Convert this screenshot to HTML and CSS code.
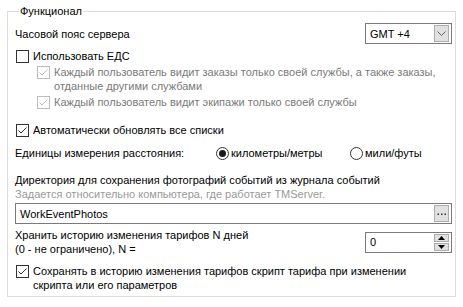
FILE: index.html
```html
<!DOCTYPE html>
<html lang="ru">
<head>
    <meta charset="UTF-8">
    <title>Функционал</title>
    <link rel="stylesheet" href="styles.css">
</head>
<body>
    <fieldset class="group">
        <legend>Функционал</legend>

        <div class="row row-tz">
            <span>Часовой пояс сервера</span>
            <div class="combo">
                <span class="combo-text">GMT +4</span>
                <span class="btn">
                    <svg width="9" height="5" viewBox="0 0 9 5"><path d="M0.5 0.5 L4.5 4.5 L8.5 0.5" fill="none" stroke="#606060"/></svg>
                </span>
            </div>
        </div>

        <label class="check row-eds">
            <span class="box"></span>
            <span>Использовать ЕДС</span>
        </label>

        <label class="check sub disabled row-sub1">
            <span class="box on"><svg width="11" height="11" viewBox="0 0 11 11"><path d="M1.5 5.5 L4 8 L9.5 2.5" fill="none" stroke="#bcbcbc"/></svg></span>
            <span>Каждый пользователь видит заказы только своей службы, а также заказы, отданные другими службами</span>
        </label>

        <label class="check sub disabled row-sub2">
            <span class="box on"><svg width="11" height="11" viewBox="0 0 11 11"><path d="M1.5 5.5 L4 8 L9.5 2.5" fill="none" stroke="#bcbcbc"/></svg></span>
            <span>Каждый пользователь видит экипажи только своей службы</span>
        </label>

        <label class="check row-auto">
            <span class="box on"><svg width="11" height="11" viewBox="0 0 11 11"><path d="M1.5 5.5 L4 8 L9.5 2.5" fill="none" stroke="#333"/></svg></span>
            <span>Автоматически обновлять все списки</span>
        </label>

        <div class="row row-units">
            <span class="units-label">Единицы измерения расстояния:</span>
            <label class="radio"><span class="dot on"></span>километры/метры</label>
            <label class="radio"><span class="dot"></span>мили/футы</label>
        </div>

        <div class="row-dir">
            <div>Директория для сохранения фотографий событий из журнала событий</div>
            <div class="hint">Задается относительно компьютера, где работает TMServer.</div>
        </div>

        <div class="field row-path">
            <span class="field-text">WorkEventPhotos</span>
            <span class="btn">
                <svg width="9" height="2" viewBox="0 0 9 2"><rect x="0.5" y="0.5" width="1.5" height="1.5" fill="#333"/><rect x="4" y="0.5" width="1.5" height="1.5" fill="#333"/><rect x="7.5" y="0.5" width="1.5" height="1.5" fill="#333"/></svg>
            </span>
        </div>

        <div class="row row-hist">
            <span>Хранить историю изменения тарифов N дней<br>(0 - не ограничено), N =</span>
            <div class="spin">
                <span class="field-text">0</span>
                <span class="arrows">
                    <span class="arrow"><svg width="7" height="4" viewBox="0 0 7 4"><path d="M3.5 0 L7 4 L0 4 Z" fill="#000"/></svg></span>
                    <span class="arrow"><svg width="7" height="4" viewBox="0 0 7 4"><path d="M0 0 L7 0 L3.5 4 Z" fill="#000"/></svg></span>
                </span>
            </div>
        </div>

        <label class="check row-last">
            <span class="box on"><svg width="11" height="11" viewBox="0 0 11 11"><path d="M1.5 5.5 L4 8 L9.5 2.5" fill="none" stroke="#333"/></svg></span>
            <span>Сохранять в историю изменения тарифов скрипт тарифа при изменении скрипта или его параметров</span>
        </label>
    </fieldset>
</body>
</html>
```

FILE: styles.css
```css
body {
    margin: 0;
    background: #fff;
    font-family: "Liberation Sans", Arial, sans-serif;
    font-size: 11px;
    line-height: 14px;
    color: #000;
}
.group {
    box-sizing: border-box;
    min-width: 0;
    width: 449px;
    margin: 4px 7px 0 7px;
    padding: 5px 3px 4px 7px;
    border: 1px solid #dcdcdc;
}
.group legend {
    padding: 0 1px;
    margin-left: 4px;
    line-height: 14px;
}
.row {
    display: flex;
    align-items: center;
    justify-content: space-between;
}
.combo, .field, .spin {
    display: flex;
    align-items: center;
    box-sizing: border-box;
    height: 21px;
    border: 1px solid #7a7a7a;
    background: #fff;
}
.combo, .spin {
    flex: none;
    width: 87px;
}
.combo-text, .field-text {
    flex: 1;
    padding-left: 4px;
}
.btn {
    box-sizing: border-box;
    width: 15px;
    height: 17px;
    margin-right: 2px;
    background: #e1e1e1;
    border: 1px solid #adadad;
    display: flex;
    align-items: center;
    justify-content: center;
}
.check {
    display: flex;
    align-items: flex-start;
    gap: 4px;
}
.box {
    box-sizing: border-box;
    flex: none;
    width: 13px;
    height: 13px;
    margin: 1px 0 0 1px;
    border: 1px solid #333;
    background: #fff;
    display: flex;
    align-items: center;
    justify-content: center;
}
.sub {
    padding-left: 21px;
}
.disabled {
    color: #7a7a7a;
}
.disabled .box {
    border-color: #bcbcbc;
}
.row-eds { margin-top: 5px; }
.row-sub1 { margin-top: 2px; }
.row-sub2 { margin-top: 2px; }
.row-auto { margin-top: 14px; }
.row-units {
    margin-top: 9px;
    justify-content: flex-start;
}
.units-label {
    flex: none;
    width: 201px;
}
.radio {
    flex: none;
    display: flex;
    align-items: center;
    gap: 2px;
    width: 134px;
}
.dot {
    box-sizing: border-box;
    width: 13px;
    height: 13px;
    border: 1px solid #333;
    border-radius: 50%;
    display: flex;
    align-items: center;
    justify-content: center;
}
.dot.on::after {
    content: "";
    width: 7px;
    height: 7px;
    border-radius: 50%;
    background: #1a1a1a;
}
.row-dir { margin-top: 13px; }
.hint { color: #999; }
.row-path {
    margin-top: 2px;
}
.row-hist { margin-top: 4px; }
.arrows {
    display: flex;
    flex-direction: column;
    gap: 1px;
    margin-right: 2px;
}
.arrow {
    box-sizing: border-box;
    width: 15px;
    height: 8px;
    background: #e1e1e1;
    border: 1px solid #adadad;
    display: flex;
    align-items: center;
    justify-content: center;
}
.row-last { margin-top: 8px; padding-right: 40px; }
```
